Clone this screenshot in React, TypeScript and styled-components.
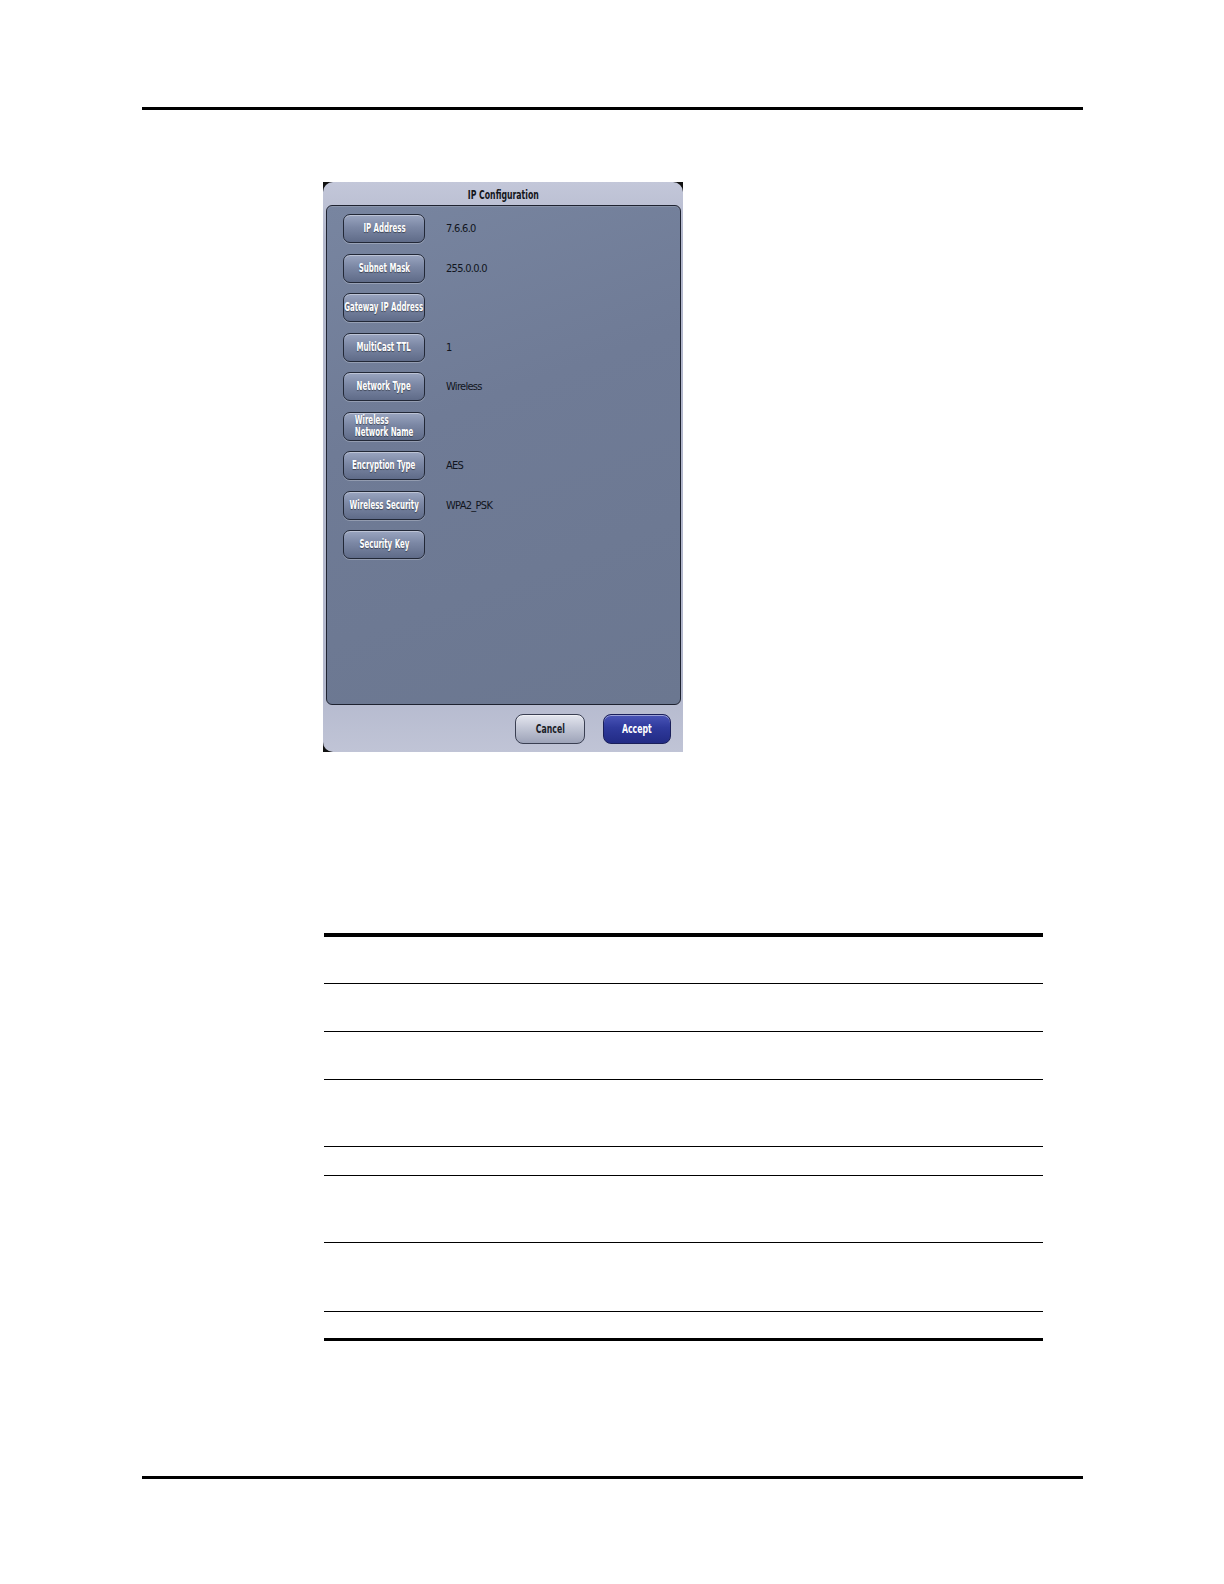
import React from "react";
import styled, { createGlobalStyle } from "styled-components";

const Global = createGlobalStyle`
  html, body { margin: 0; padding: 0; background: #ffffff; }
  body { font-family: "Liberation Sans", Arial, sans-serif; }
`;

const Page = styled.div`
  width: 1224px;
  height: 1584px;
  padding-top: 107px;
  box-sizing: border-box;
  display: flex;
  flex-direction: column;
`;

const Rule = styled.div<{ $top?: number }>`
  margin-left: 142px;
  width: 941px;
  height: 3px;
  background: #000;
  margin-top: ${(p) => p.$top ?? 0}px;
`;

const Frame = styled.div`
  margin-top: 72px;
  margin-left: 323px;
  width: 360px;
  height: 570px;
  background: linear-gradient(#111 0 0) top left / 12px 12px no-repeat,
    linear-gradient(#111 0 0) top right / 12px 12px no-repeat,
    linear-gradient(#111 0 0) bottom left / 12px 12px no-repeat;
`;

const Dialog = styled.div`
  width: 100%;
  height: 100%;
  box-sizing: border-box;
  border-radius: 10px 10px 0 10px;
  background: linear-gradient(180deg, #c3c7d9 0%, #b3b8cd 10%, #b3b8cd 88%, #c0c4d6 100%);
  display: flex;
  flex-direction: column;
  padding: 0 2px 0 3px;
  font-family: "DejaVu Sans Condensed", "Liberation Sans Narrow", "Liberation Sans", sans-serif;
  font-stretch: condensed;
`;

const Label = styled.span<{ $lines?: boolean; $scale?: number }>`
  display: inline-block;
  transform: scaleX(${(p) => p.$scale ?? 0.75});
  transform-origin: center;
  white-space: nowrap;
  text-align: ${(p) => (p.$lines ? "left" : "center")};
`;

const Title = styled.div`
  height: 23px;
  display: flex;
  align-items: center;
  justify-content: center;
  font-size: 11.5px;
  font-weight: bold;
  color: #14161c;
  padding-top: 2px;
  box-sizing: border-box;
`;

const Panel = styled.div`
  height: 500px;
  box-sizing: border-box;
  border: 1.5px solid #1e2230;
  border-radius: 6px;
  background: linear-gradient(160deg, #7885a0 0%, #6f7b96 40%, #6b7790 100%);
  box-shadow: inset 0 1px 0 rgba(255, 255, 255, 0.15);
  padding: 8px 0 0 16px;
  display: grid;
  grid-template-columns: 82px 1fr;
  grid-auto-rows: 29px;
  row-gap: 10.5px;
  column-gap: 21px;
  align-content: start;
`;

const FieldButton = styled.button`
  width: 82px;
  height: 29px;
  box-sizing: border-box;
  border: 1.5px solid #222837;
  border-radius: 7px;
  background: linear-gradient(180deg, #9aa5c0 0%, #7b87a4 45%, #5f6b88 100%);
  box-shadow: inset 0 1px 0 rgba(255, 255, 255, 0.35), 0 1px 0 rgba(255, 255, 255, 0.25);
  color: #fff;
  font-family: inherit;
  font-stretch: condensed;
  font-size: 12px;
  font-weight: bold;
  line-height: 12.5px;
  text-shadow: 0 1px 1px rgba(0, 0, 0, 0.45);
  padding: 0;
  display: flex;
  align-items: center;
  justify-content: center;
  overflow: visible;
`;

const Value = styled.div`
  display: flex;
  align-items: center;
  font-size: 11px;
  color: #111520;
  letter-spacing: -0.7px;
`;

const Footer = styled.div`
  flex: 1;
  display: flex;
  justify-content: flex-end;
  align-items: flex-start;
  padding: 9px 10px 0 0;
  gap: 18px;
`;

const ActionButton = styled.button<{ $primary?: boolean }>`
  width: ${(p) => (p.$primary ? 68 : 70)}px;
  height: 30px;
  box-sizing: border-box;
  border-radius: 8px;
  border: 1.5px solid ${(p) => (p.$primary ? "#1a1f5a" : "#3a3f52")};
  background: ${(p) =>
    p.$primary
      ? "linear-gradient(180deg, #4a55b8 0%, #2f3a9c 45%, #222b85 100%)"
      : "linear-gradient(180deg, #e4e6ef 0%, #c3c7d6 45%, #9da3b8 100%)"};
  box-shadow: inset 0 1px 0 rgba(255, 255, 255, 0.45);
  color: ${(p) => (p.$primary ? "#ffffff" : "#1a1d28")};
  font-family: inherit;
  font-stretch: condensed;
  font-size: 11.5px;
  font-weight: bold;
  padding: 0;
`;

const Table = styled.table`
  margin-top: 181px;
  margin-left: 324px;
  width: 719px;
  border-collapse: collapse;
  border-top: 4px solid #000;
  border-bottom: 3px solid #000;
`;

const Row = styled.tr<{ $h: number; $last?: boolean }>`
  height: ${(p) => p.$h}px;
  td {
    padding: 0;
    border-bottom: ${(p) => (p.$last ? "none" : "1px solid #000")};
  }
`;

const S = 0.65;

const fields: { label: React.ReactNode; value: string }[] = [
  { label: <Label $scale={S}>IP Address</Label>, value: "7.6.6.0" },
  { label: <Label $scale={S}>Subnet Mask</Label>, value: "255.0.0.0" },
  { label: <Label $scale={S}>Gateway IP Address</Label>, value: "" },
  { label: <Label $scale={S}>MultiCast TTL</Label>, value: "1" },
  { label: <Label $scale={S}>Network Type</Label>, value: "Wireless" },
  {
    label: (
      <Label $lines $scale={S}>
        Wireless
        <br />
        Network Name
      </Label>
    ),
    value: "",
  },
  { label: <Label $scale={S}>Encryption Type</Label>, value: "AES" },
  { label: <Label $scale={S}>Wireless Security</Label>, value: "WPA2_PSK" },
  { label: <Label $scale={S}>Security Key</Label>, value: "" },
];

const rowHeights = [48, 48, 48, 67, 29, 67, 69, 28];

export default function App() {
  return (
    <>
      <Global />
      <Page>
        <Rule />
        <Frame>
          <Dialog>
            <Title>
              <Label>IP Configuration</Label>
            </Title>
            <Panel>
              {fields.map((f, i) => (
                <React.Fragment key={i}>
                  <FieldButton>{f.label}</FieldButton>
                  <Value>{f.value}</Value>
                </React.Fragment>
              ))}
            </Panel>
            <Footer>
              <ActionButton>
                <Label>Cancel</Label>
              </ActionButton>
              <ActionButton $primary>
                <Label>Accept</Label>
              </ActionButton>
            </Footer>
          </Dialog>
        </Frame>
        <Table>
          <tbody>
            {rowHeights.map((h, i) => (
              <Row key={i} $h={h} $last={i === rowHeights.length - 1}>
                <td />
              </Row>
            ))}
          </tbody>
        </Table>
        <Rule $top={135} />
      </Page>
    </>
  );
}
